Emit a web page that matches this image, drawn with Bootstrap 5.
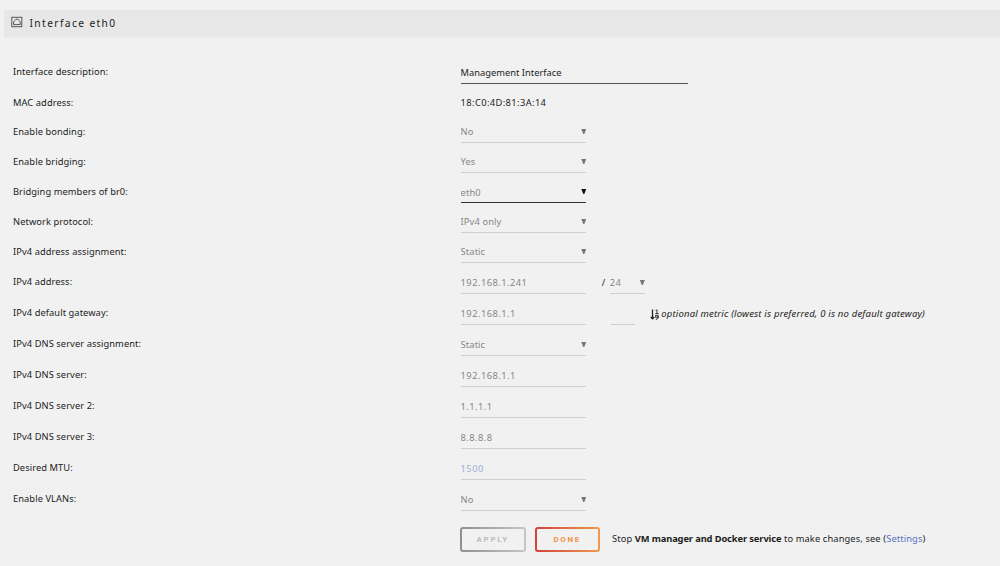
<!DOCTYPE html>
<html lang="en">

<head>
  <meta charset="UTF-8" />
  <meta name="viewport" content="width=device-width, initial-scale=1" />
  <title>Network Settings</title>
  <link href="https://cdn.jsdelivr.net/npm/bootstrap@5.3.0/dist/css/bootstrap.min.css" rel="stylesheet" />
  <style>
    body {
      background: #f1f1f1;
      color: #1c1c1c;
      font-family: "Noto Sans", sans-serif;
      font-size: 9.3px;
      line-height: 14px;
      letter-spacing: 0.08px;
      overflow: hidden;
    }

    .panel-title {
      height: 28px;
      margin: 10px 0 0 4px;
      padding: 0 0 2px 7px;
      background: #e7e7e7;
      border-bottom: 1px solid #ebebeb;
      font-size: 10.2px;
      letter-spacing: 1.4px;
    }

    .panel-title svg {
      width: 12px;
      height: 12px;
      margin: 0 6.5px 2px 0;
    }

    .settings {
      padding: 15px 0 0 13px;
    }

    .setting {
      height: 31px;
    }

    .setting-short {
      height: 30px;
    }

    .setting-mac {
      height: 28px;
    }

    .setting-label {
      width: 447.6px;
      padding-bottom: 5px;
      flex: none;
    }

    .setting-short .setting-label,
    .setting-mac + .setting .setting-label {
      padding-bottom: 4px;
    }

    .setting-mac .setting-label,
    .mac-value {
      padding-bottom: 2px;
    }

    .mac-value {
      letter-spacing: 0.4px;
    }

    .field {
      width: 125.7px;
      height: 19px;
      padding: 0 0 3px;
      border: 0;
      border-bottom: 1px solid #cfcfcf;
      border-radius: 0;
      background: transparent;
      color: #868686;
      font: inherit;
      letter-spacing: 0.12px;
      appearance: none;
      opacity: 1;
    }

    .field-wide {
      width: 227.5px;
      padding-bottom: 4px;
      border-color: #555;
      color: #1c1c1c;
      letter-spacing: 0.02px;
    }

    .field-num {
      letter-spacing: 0.46px;
    }

    .field-active {
      padding-bottom: 1px;
      border-color: #333;
    }

    .field-link {
      color: #a0aed6;
    }

    .field-mask {
      width: 35px;
    }

    .field-metric {
      width: 24px;
      margin-left: 24.3px;
    }

    .picker {
      position: relative;
      display: flex;
    }

    .picker::after {
      content: "";
      position: absolute;
      right: 0;
      top: 5px;
      width: 5px;
      height: 5px;
      background: #777;
      clip-path: polygon(0 0, 100% 0, 60% 100%, 40% 100%);
    }

    .picker-active::after {
      background: #111;
    }

    .slash {
      padding: 0 4.5px 4px 15.5px;
    }

    .hint {
      padding: 0 0 4px 15.4px;
      font-size: 9.5px;
      letter-spacing: 0.19px;
    }

    .hint svg {
      width: 9px;
      height: 11px;
      margin-right: 2.3px;
    }

    .actions {
      padding: 16px 0 0 460px;
    }

    .action-btn {
      width: 65.5px;
      height: 24.5px;
      margin-right: 9px;
      padding: 0;
      border: 2px solid transparent;
      border-radius: 3px;
      font-family: Roboto, sans-serif;
      font-size: 8px;
      font-weight: 700;
      letter-spacing: 1.7px;
      line-height: 21px;
    }

    .action-apply {
      background: linear-gradient(#f1f1f1, #f1f1f1) padding-box, linear-gradient(90deg, #8f8f8f, #c6c6c6) border-box;
      color: #bcbcbc;
    }

    .action-done {
      background: linear-gradient(#f1f1f1, #f1f1f1) padding-box, linear-gradient(90deg, #d3413a, #f09a4f) border-box;
      color: #f09447;
    }

    .notice {
      padding-left: 3px;
      letter-spacing: 0.12px;
    }

    .notice b {
      letter-spacing: -0.1px;
    }

    .settings-link {
      color: #5470c0;
    }
  </style>
</head>

<body>
  <div class="panel-title d-flex align-items-center">
    <svg viewBox="0 0 12 12" fill="none" stroke="#555">
      <rect x=".8" y="1.3" width="10" height="9.4" stroke-width="1" />
      <path d="M2.6 8.6V5.8L4.3 4.2L5 3.2H6.8L7.5 4.2L9.2 5.8V8.6Z" stroke-width="1" />
    </svg>
    <span class="title-text">Interface eth0</span>
  </div>

  <form class="settings">
    <div class="setting d-flex align-items-end">
      <label class="setting-label"><span>Interface description:</span></label>
      <input class="field field-wide" type="text" value="Management Interface">
    </div>
    <div class="setting setting-mac d-flex align-items-end">
      <label class="setting-label"><span>MAC address:</span></label>
      <span class="mac-value">18:C0:4D:81:3A:14</span>
    </div>
    <div class="setting d-flex align-items-end">
      <label class="setting-label"><span>Enable bonding:</span></label>
      <div class="picker"><select class="field" disabled><option>No</option></select></div>
    </div>
    <div class="setting setting-short d-flex align-items-end">
      <label class="setting-label"><span>Enable bridging:</span></label>
      <div class="picker"><select class="field" disabled><option>Yes</option></select></div>
    </div>
    <div class="setting setting-short d-flex align-items-end">
      <label class="setting-label"><span>Bridging members of br0:</span></label>
      <div class="picker picker-active"><select class="field field-active"><option>eth0</option></select></div>
    </div>
    <div class="setting setting-short d-flex align-items-end">
      <label class="setting-label"><span>Network protocol:</span></label>
      <div class="picker"><select class="field" disabled><option>IPv4 only</option></select></div>
    </div>
    <div class="setting setting-short d-flex align-items-end">
      <label class="setting-label"><span>IPv4 address assignment:</span></label>
      <div class="picker"><select class="field" disabled><option>Static</option></select></div>
    </div>
    <div class="setting d-flex align-items-end">
      <label class="setting-label"><span>IPv4 address:</span></label>
      <input class="field field-num" type="text" value="192.168.1.241" disabled>
      <span class="slash">/</span>
      <div class="picker"><select class="field field-num field-mask" disabled><option>24</option></select></div>
    </div>
    <div class="setting d-flex align-items-end">
      <label class="setting-label"><span>IPv4 default gateway:</span></label>
      <input class="field field-num" type="text" value="192.168.1.1" disabled>
      <input class="field field-metric" type="text" disabled>
      <span class="hint d-flex align-items-center">
        <svg viewBox="0 0 9 11" fill="none" stroke="#222">
          <path d="M2.5 .5V9.5M.7 8L2.5 9.8L4.3 8" stroke-width="1.3" />
          <path d="M5.6 1.5L7 .9V4.5M5.4 4.5H8.6" stroke-width=".9" />
          <rect x="5.7" y="6.3" width="2.4" height="2" stroke-width=".9" />
          <path d="M8.1 7V9L7 10.3H5.8" stroke-width=".9" />
        </svg>
        <em class="hint-text">optional metric (lowest is preferred, 0 is no default gateway)</em>
      </span>
    </div>
    <div class="setting d-flex align-items-end">
      <label class="setting-label"><span>IPv4 DNS server assignment:</span></label>
      <div class="picker"><select class="field" disabled><option>Static</option></select></div>
    </div>
    <div class="setting d-flex align-items-end">
      <label class="setting-label"><span>IPv4 DNS server:</span></label>
      <input class="field field-num" type="text" value="192.168.1.1" disabled>
    </div>
    <div class="setting d-flex align-items-end">
      <label class="setting-label"><span>IPv4 DNS server 2:</span></label>
      <input class="field field-num" type="text" value="1.1.1.1" disabled>
    </div>
    <div class="setting d-flex align-items-end">
      <label class="setting-label"><span>IPv4 DNS server 3:</span></label>
      <input class="field field-num" type="text" value="8.8.8.8" disabled>
    </div>
    <div class="setting d-flex align-items-end">
      <label class="setting-label"><span>Desired MTU:</span></label>
      <input class="field field-num field-link" type="text" value="1500" disabled>
    </div>
    <div class="setting d-flex align-items-end">
      <label class="setting-label"><span>Enable VLANs:</span></label>
      <div class="picker"><select class="field" disabled><option>No</option></select></div>
    </div>
  </form>

  <div class="actions d-flex align-items-center">
    <button type="button" class="action-btn action-apply">APPLY</button>
    <button type="button" class="action-btn action-done">DONE</button>
    <span class="notice">Stop <b>VM manager and Docker service</b> to make changes, see (<a href="#" class="settings-link text-decoration-none">Settings</a>)</span>
  </div>

  <script src="https://cdn.jsdelivr.net/npm/bootstrap@5.3.0/dist/js/bootstrap.bundle.min.js"></script>
</body>

</html>
